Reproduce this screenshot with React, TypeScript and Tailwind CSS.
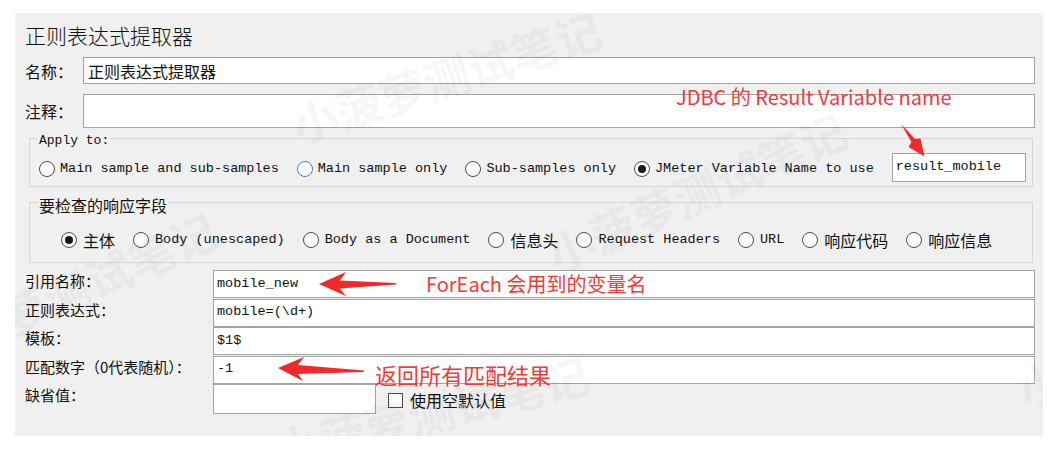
import React from "react";

const CJK = "font-['Noto_Sans_CJK_SC',sans-serif]";
const MONO = "font-['Liberation_Mono',monospace]";

function Radio({ checked = false, focus = false }: { checked?: boolean; focus?: boolean }) {
  return (
    <span
      className={`inline-flex shrink-0 items-center justify-center w-[16px] h-[16px] rounded-full bg-white border ${
        focus ? "border-[#3d7fc1]" : "border-[#4a4a4a]"
      }`}
    >
      {checked && <span className="w-[8px] h-[8px] rounded-full bg-[#1a1a1a]" />}
    </span>
  );
}

function RadioItem({
  label,
  checked,
  focus,
  mono,
  gap = 5,
}: {
  label: string;
  checked?: boolean;
  focus?: boolean;
  mono?: boolean;
  gap?: number;
}) {
  return (
    <span className="flex items-center">
      <Radio checked={checked} focus={focus} />
      <span
        className={`${mono ? `${MONO} text-[13.5px]` : `${CJK} text-[16px]`} whitespace-pre text-[#111] ${
          gap === 5 ? "ml-[5px]" : "ml-[6px]"
        }`}
      >
        {label}
      </span>
    </span>
  );
}

function Watermark({ className }: { className: string }) {
  return (
    <div
      className={`absolute pointer-events-none whitespace-nowrap font-bold text-[46px] leading-none text-black/[0.055] ${CJK} ${className}`}
    >
      小菠萝测试笔记
    </div>
  );
}

export default function App() {
  const inputBorder = "border border-[#a3a3a3] bg-white";
  const lower = [
    { label: "引用名称：", value: "mobile_new" },
    { label: "正则表达式：", value: "mobile=(\\d+)" },
    { label: "模板：", value: "$1$" },
    { label: "匹配数字（0代表随机）：", value: "-1" },
  ];
  return (
    <div className="relative w-[1060px] h-[453px] bg-white overflow-hidden text-[#111]">
      <div className="relative ml-[15px] mt-[13px] w-[1028px] h-[423px] bg-[#f0f0f0] pl-[10px] pr-[8px] pt-[7px] overflow-hidden">
        {/* Title */}
        <div className={`${CJK} text-[21px] leading-[30px] h-[30px] font-light`}>正则表达式提取器</div>

        {/* 名称 */}
        <div className="flex items-center mt-[7px] h-[27px]">
          <div className={`${CJK} text-[16px] w-[58px]`}>名称：</div>
          <div className={`flex-1 h-full ${inputBorder} flex items-center pl-[4px] ${CJK} text-[16px]`}>
            正则表达式提取器
          </div>
        </div>

        {/* 注释 */}
        <div className="flex items-center mt-[10px] h-[34px]">
          <div className={`${CJK} text-[16px] w-[58px]`}>注释：</div>
          <div className={`flex-1 h-full ${inputBorder}`} />
        </div>

        {/* Apply to */}
        <div className="relative ml-[4px] mr-[2px] mt-[10px] h-[49px] border border-[#d6d6d6] pt-[14px] pl-[9px]">
          <span className={`absolute left-[8px] top-[-6px] bg-[#f0f0f0] px-[1px] ${MONO} text-[13px] leading-[16px]`}>
            Apply to:
          </span>
          <div className="flex items-center h-[29px] gap-[18px]">
            <div className="flex items-center gap-[18px] pt-[3px]">
              <RadioItem mono label="Main sample and sub-samples" />
              <RadioItem mono focus label="Main sample only" />
              <RadioItem mono label="Sub-samples only" />
              <RadioItem mono checked label="JMeter Variable Name to use" />
            </div>
            <div className={`w-[134px] h-[29px] ${inputBorder} flex items-center pl-[3px] ${MONO} text-[13.5px]`}>
              result_mobile
            </div>
          </div>
        </div>

        {/* 要检查的响应字段 */}
        <div className="relative ml-[4px] mr-[2px] mt-[15px] h-[61px] border border-[#d6d6d6] pl-[31px] pt-[28px]">
          <span className={`absolute left-[8px] top-[-8px] bg-[#f0f0f0] px-[1px] ${CJK} text-[16px] leading-[20px]`}>
            要检查的响应字段
          </span>
          <div className="flex items-center h-[18px] gap-[18px]">
            <RadioItem checked label="主体" gap={4} />
            <RadioItem mono label="Body (unescaped)" gap={6} />
            <RadioItem mono label="Body as a Document" gap={6} />
            <RadioItem label="信息头" gap={6} />
            <RadioItem mono label="Request Headers" gap={6} />
            <RadioItem mono label="URL" gap={6} />
            <RadioItem label="响应代码" gap={6} />
            <RadioItem label="响应信息" gap={6} />
          </div>
        </div>

        {/* Lower fields */}
        <div className="mt-[7px] flex flex-col">
          {lower.map((r) => (
            <div key={r.label} className="flex items-start h-[28.5px]">
              <div className={`${CJK} text-[15px] leading-[20px] w-[188px] pt-[1px] whitespace-nowrap`}>{r.label}</div>
              <div className={`flex-1 h-[28px] ${inputBorder} flex items-center pl-[3px] ${MONO} text-[13.5px]`}>
                {r.value}
              </div>
            </div>
          ))}
          <div className="flex items-start h-[30px]">
            <div className={`${CJK} text-[15px] leading-[20px] w-[188px] pt-[1px]`}>缺省值：</div>
            <div className={`w-[163px] h-[30px] ${inputBorder}`} />
            <div className="flex items-center ml-[12px] mt-[6px]">
              <span className="w-[15px] h-[15px] bg-white border border-[#4a4a4a]" />
              <span className={`${CJK} text-[16px] leading-[20px] ml-[7px]`}>使用空默认值</span>
            </div>
          </div>
        </div>

        {/* watermarks */}
        <Watermark className="left-[270px] top-[40px] -rotate-[18deg]" />
        <Watermark className="left-[520px] top-[155px] -rotate-[24deg]" />
        <Watermark className="left-[-110px] top-[255px] -rotate-[24deg]" />
        <Watermark className="left-[255px] top-[375px] -rotate-[14deg]" />
        <Watermark className="left-[990px] top-[290px] -rotate-[24deg]" />
      </div>

      {/* Annotations */}
      <div className={`absolute left-[676px] top-[85px] ${CJK} text-[20px] leading-[24px] text-[#f23a3a] whitespace-nowrap`}>
        JDBC 的 Result Variable name
      </div>
      <div className={`absolute left-[426px] top-[272px] ${CJK} text-[20px] leading-[24px] text-[#f23a3a] whitespace-nowrap`}>
        ForEach 会用到的变量名
      </div>
      <div className={`absolute left-[375px] top-[361px] ${CJK} text-[22px] leading-[26px] text-[#f23a3a] whitespace-nowrap`}>
        返回所有匹配结果
      </div>

      <svg className="absolute left-0 top-0 pointer-events-none" width="1060" height="453" viewBox="0 0 1060 453">
        {/* top arrow */}
        <path d="M901 124 L915 139 L920.5 138.5 L924.5 156.5 L908.5 147 L911.5 142 Z" fill="#f02a2a" />
        {/* arrow 1 */}
        <path d="M319 284 L346 272 L340 280.5 L396 283 L396 284.5 L340 288.5 L346 296 Z" fill="#f02a2a" />
        {/* arrow 2 */}
        <path d="M278 368 L304 357 L298 365 L364 370.5 L364 372 L298 374 L303 381 Z" fill="#f02a2a" />
      </svg>
    </div>
  );
}
